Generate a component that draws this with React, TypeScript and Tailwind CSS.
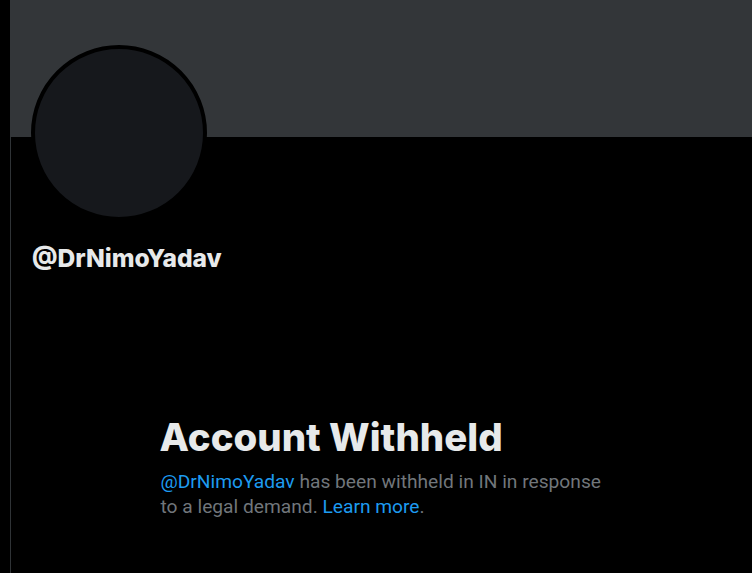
import React from "react";

export default function App() {
  return (
    <div className="flex h-[573px] w-[752px] overflow-hidden bg-black">
      <div className="w-[10px] shrink-0 bg-black" />
      <div className="flex flex-1 flex-col">
        <div className="h-[137px] shrink-0 bg-[#333639]" />
        <div className="flex flex-1 flex-col border-l border-[#2f3336]">
          <div className="relative -mt-[92px] ml-[20px] h-[176px] w-[176px] rounded-full border-4 border-black bg-[#16181c]" />
          <div
            className="ml-[21px] mt-[22px] text-[24.6px] font-extrabold leading-[30px] text-[#e7e9ea]"
            style={{ fontFamily: "Inter, 'Noto Sans', sans-serif" }}
          >
            @DrNimoYadav
          </div>
          <div className="mx-auto mt-[142px] w-[442px]">
            <h1
              className="-ml-[1px] text-[38.4px] font-extrabold leading-[44px] text-[#e7e9ea]"
              style={{ fontFamily: "Inter, 'Noto Sans', sans-serif" }}
            >
              Account Withheld
            </h1>
            <p
              className="mt-[10px] whitespace-nowrap text-[19.2px] leading-[25px] text-[#71767b]"
              style={{ fontFamily: "Roboto, 'Noto Sans', sans-serif" }}
            >
              <span className="text-[#1d9bf0]">@DrNimoYadav</span> has been withheld in IN in response
              <br />
              to a legal demand. <span className="text-[#1d9bf0]">Learn more</span>.
            </p>
          </div>
        </div>
      </div>
    </div>
  );
}
